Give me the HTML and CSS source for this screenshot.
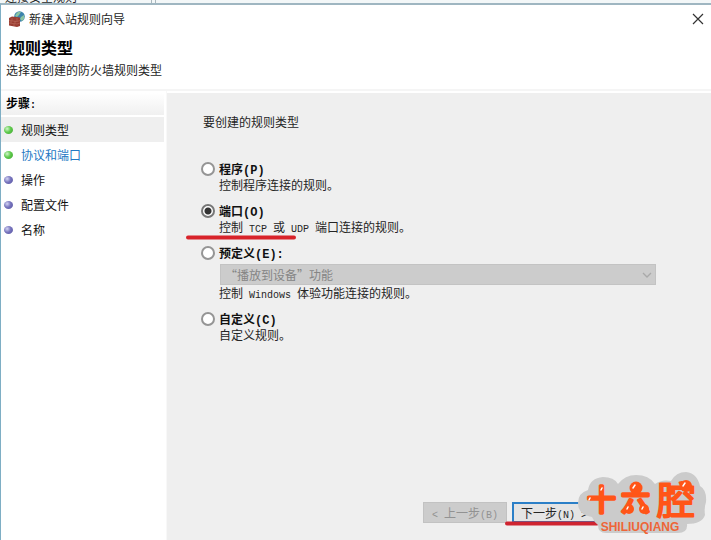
FILE: index.html
```html
<!DOCTYPE html>
<html lang="zh-CN">
<head>
<meta charset="utf-8">
<title>新建入站规则向导</title>
<link rel="stylesheet" href="styles.css">
</head>
<body>
<div class="backdrop"><span class="backdrop-text">连接安全规则</span><span class="backdrop-split"></span></div>
<div class="wizard">
  <header class="head">
    <div class="titlebar">
      <svg class="app-icon" width="16" height="16" viewBox="0 0 16 16" aria-hidden="true">
        <circle cx="10.500" cy="5.500" r="5.300" fill="#3b83ad"/>
        <path d="M7 3Q9 0 12 1L10 4L8 6L6 5ZM12 6L15 4Q16 8 13 10L11 8Z" fill="#8cc4a1"/>
        <path d="M0 7L3 5.500L11 6.500V15L8 16L0 14.500Z" fill="#9a3d32"/>
        <path d="M0 9.500L8 10.500L11 9.500M0 12L8 13L11 12M3 7V9.500M6 10V12.500M2 10V12M5 13V15M8 7V10" stroke="#c07868" stroke-width=".5" fill="none"/>
      </svg>
      <span class="caption">新建入站规则向导</span>
      <button class="close" type="button" aria-label="关闭">
        <svg width="12" height="12" viewBox="0 0 12 12"><path d="M1 1L11 11M11 1L1 11" stroke="#333" stroke-width="1.200"/></svg>
      </button>
    </div>
    <h1>规则类型</h1>
    <p class="subtitle">选择要创建的防火墙规则类型</p>
  </header>
  <div class="content">
    <nav class="steps">
      <h2>步骤<span class="lat">:</span></h2>
      <ul>
        <li class="step done current">规则类型</li>
        <li class="step done"><a href="#protocol">协议和端口</a></li>
        <li class="step">操作</li>
        <li class="step">配置文件</li>
        <li class="step">名称</li>
      </ul>
    </nav>
    <main class="page">
      <form class="options">
        <p class="question">要创建的规则类型</p>
        <div class="option">
          <input type="radio" name="type" id="program">
          <label for="program">程序<span class="lat">(P)</span></label>
          <p>控制程序连接的规则。</p>
        </div>
        <div class="option">
          <input type="radio" name="type" id="port" checked>
          <label for="port">端口<span class="lat">(O)</span></label>
          <p>控制<span class="lat"> TCP </span>或<span class="lat"> UDP </span>端口连接的规则。</p>
          <svg class="mark mark-port" width="110" height="5" viewBox="0 0 110 5" aria-hidden="true"><path d="M2 2.500H108" stroke="#d8232a" stroke-width="4" stroke-linecap="round"/></svg>
        </div>
        <div class="option">
          <input type="radio" name="type" id="predefined">
          <label for="predefined">预定义<span class="lat">(E):</span></label>
          <div class="picker">
            <select disabled aria-label="预定义规则"><option>“播放到设备”功能</option></select>
            <svg class="arrow" width="10" height="6" viewBox="0 0 10 6" aria-hidden="true"><path d="M1 1L5 5L9 1" stroke="#a9a9a9" stroke-width="1.300" fill="none"/></svg>
          </div>
          <p>控制<span class="lat"> Windows </span>体验功能连接的规则。</p>
        </div>
        <div class="option">
          <input type="radio" name="type" id="custom">
          <label for="custom">自定义<span class="lat">(C)</span></label>
          <p>自定义规则。</p>
        </div>
      </form>
      <footer class="actions">
        <button class="btn" type="button" disabled><span class="lat">&lt; </span>上一步<span class="lat">(B)</span></button>
        <button class="btn primary" type="button">下一步<span class="lat">(N) &gt;</span></button>
        <svg class="mark mark-next" width="94" height="5" viewBox="0 0 94 5" aria-hidden="true"><path d="M2 2.500H92" stroke="#cf2430" stroke-width="4" stroke-linecap="round"/></svg>
        <svg class="logo" width="132" height="66" viewBox="0 0 132 66" role="img" aria-label="十六腔 SHILIUQIANG">
          <path d="M0 31Q0 21 10 18Q12 6 25 5Q36 5 40 12Q47 3 58 3Q71 3 77 12Q84 7 93 9Q98 0 108 0Q119 1 122 14Q129 18 128 30Q126 36 127 43Q124 52 109 52Q110 61 100 61H28Q20 61 20 53Q16 50 14 45Q0 43 0 31Z" fill="#cbcbcb"/>
          <g class="logo-name">
            <text x="9" y="39">十</text>
            <text x="43" y="39">六</text>
          </g>
          <text class="logo-last" x="79" y="42">腔</text>
          <circle cx="58" cy="16" r="6.500" fill="#ff5518"/>
          <circle cx="51" cy="37" r="5" fill="#ff5518"/>
          <circle cx="66" cy="37" r="5" fill="#ff5518"/>
          <circle cx="108" cy="14" r="6" fill="#ff5518"/>
          <path d="M11 28L12 26M23 18L24 16M55 16L57 13M49 37L50 35M64 37L65 35M105 14L107 11" stroke="#fff" stroke-width="1.500" stroke-linecap="round"/>
          <text class="logo-latin" x="62" y="59" text-anchor="middle">SHILIUQIANG</text>
        </svg>
      </footer>
    </main>
  </div>
</div>
</body>
</html>
```
FILE: styles.css
```css
* { box-sizing: border-box; }
body {
  margin: 0;
  min-height: 100vh;
  display: flex;
  flex-direction: column;
  font: 12px/16px "Noto Sans CJK SC", "Liberation Sans", sans-serif;
  color: #252525;
  background: #fff;
}
h1, h2, p, ul { margin: 0; padding: 0; }
.lat { font-family: "Liberation Mono", monospace; font-size: 10px; line-height: 10px; white-space: pre; }
.backdrop {
  height: 3px;
  overflow: hidden;
  display: flex;
  align-items: flex-end;
  gap: 74px;
  padding-left: 5px;
  background: #f3f7f8;
}
.backdrop-text { line-height: 12px; }
.backdrop-split { width: 5px; height: 3px; border: solid #aab7bd; border-width: 0 1px; }
.wizard {
  flex: 1;
  display: flex;
  flex-direction: column;
  border-top: 2px solid #9fb6c1;
  border-left: 1px solid #7eaec4;
}
.head { height: 86px; border-bottom: 2px solid #f5f5f5; }
.titlebar { display: flex; align-items: center; height: 27px; padding: 0 7px 0 8px; }
.caption { flex: 1; margin-left: 4px; }
.close { display: flex; padding: 0; border: 0; background: none; }
h1 { padding-left: 8px; font-size: 16px; line-height: 30px; font-weight: 700; color: #000; }
.subtitle { padding-left: 5px; }
.content { flex: 1; display: flex; }
.steps { width: 166px; padding: 2px 2px 0 0; border-right: 1px solid #f8f8f8; }
h2 {
  height: 22px;
  padding-left: 5px;
  font-size: 12px;
  line-height: 20px;
  color: #000;
  background: linear-gradient(#fff, #f0f0f0);
}
.steps ul { list-style: none; padding-top: 2px; }
.step { display: flex; align-items: center; height: 25px; color: #111; }
.step::before {
  content: "";
  width: 9px;
  height: 8px;
  margin: 0 8px 0 3px;
  border-radius: 50%;
  background: radial-gradient(circle at 35% 35%, #d5d5f4, #7774bd 45%, #5551a0);
}
.done::before { background: radial-gradient(circle at 35% 35%, #d3f5cb, #5fca4c 45%, #3ca32e); }
.current { background: #efefef; }
.step a { color: #2378c4; text-decoration: none; }
.page { flex: 1; display: flex; flex-direction: column; margin-top: 2px; background: #efefef; }
.options { flex: 1; display: flex; flex-direction: column; gap: 10px; padding: 21px 55px 0 34px; }
.question { margin-bottom: 21px; padding-left: 2px; }
.option {
  position: relative;
  display: grid;
  grid-template-columns: 14px 1fr;
  column-gap: 4px;
}
.option input {
  appearance: none;
  width: 14px;
  height: 14px;
  margin: 1px 0 0;
  border: 2px solid #959595;
  border-radius: 50%;
  background: #fff;
}
.option input:checked { border-color: #777; background: radial-gradient(circle, #333 3px, #fff 4px); }
.option label { font-weight: 700; color: #111; }
.option label, .option p { height: 16px; white-space: nowrap; }
.option label .lat { font-size: 12px; }
.option p, .picker { grid-column: 2; }
.picker { position: relative; margin-top: 3px; margin-left: 1px; }
select {
  display: block;
  appearance: none;
  width: 100%;
  height: 21px;
  padding: 0 4px;
  border: 1px solid #c3c3c3;
  border-radius: 0;
  font: inherit;
  color: #858585;
  background: #ccc;
  opacity: 1;
}
.arrow { position: absolute; right: 4px; top: 8px; }
.mark { position: absolute; }
.mark-port { left: -15px; bottom: -5px; }
.actions {
  position: relative;
  display: flex;
  justify-content: flex-end;
  gap: 5px;
  padding: 0 115px 17px 0;
}
.btn {
  width: 84px;
  height: 21px;
  padding: 0;
  border: 1px solid #c2c2c2;
  font: inherit;
  line-height: 16px;
  color: #252525;
  background: #e4e4e4;
}
.btn .lat { font-size: 10px; }
.btn:disabled { color: #929292; background: #ccc; }
.primary { border: 2px solid #2b7fc7; }
.mark-next { right: 112px; bottom: 14px; }
.logo { position: absolute; right: 1px; bottom: 2px; }
.logo text { fill: #ff5518; stroke: #ff5518; stroke-linejoin: round; stroke-linecap: round; }
.logo-name { font-size: 29px; stroke-width: 3px; }
.logo .logo-last { font-size: 38px; stroke-width: 2px; }
.logo .logo-latin { font: 700 12px "Liberation Sans", sans-serif; stroke: none; fill: #ee6537; }
```
